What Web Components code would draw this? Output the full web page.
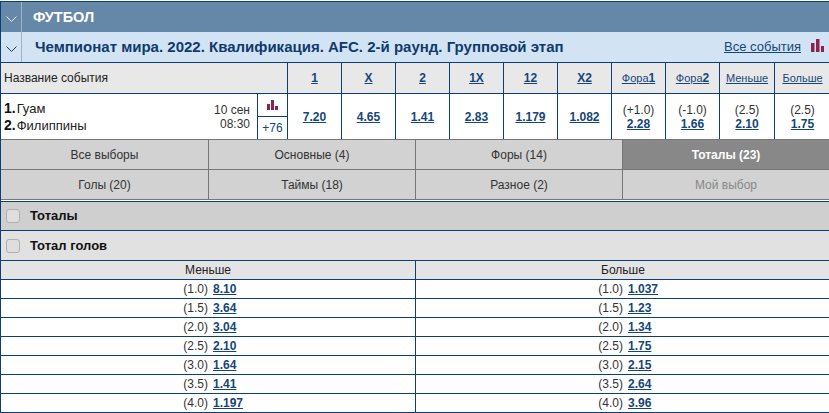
<!DOCTYPE html>
<html lang="ru">
<head>
<meta charset="utf-8">
<title>Футбол</title>
<style>
  html, body { margin: 0; background: #fff; }
  body { font: 12px "Liberation Sans", Arial, sans-serif; color: #222; }
  #page { width: 829px; box-sizing: border-box; margin-top: 1px; border-left: 1px solid #0b3f78; }
</style>
</head>
<body>
<div id="page">
  <sport-bar>ФУТБОЛ</sport-bar>
  <league-bar>Чемпионат мира. 2022. Квалификация. AFC. 2-й раунд. Групповой этап</league-bar>
  <event-table></event-table>
  <market-tabs></market-tabs>
  <group-head variant="dark" style="margin-top:1px;border-top:1px solid #0b3f78">Тоталы</group-head>
  <group-head>Тотал голов</group-head>
  <odds-grid></odds-grid>
</div>

<script>
const chevron = (color) => `<svg width="11" height="6" viewBox="0 0 11 6"><path d="M.5 .5 L5.5 5.5 L10.5 .5" fill="none" stroke="${color}" stroke-width="1"/></svg>`;

class SportBar extends HTMLElement {
  constructor() {
    super();
    this.attachShadow({ mode: "open" }).innerHTML = `
      <style>
        :host { display: flex; height: 30px; border-top: 1px solid #0b3f78; background: #6587a8; color: #fff; font: bold 14.5px "Liberation Sans", Arial, sans-serif; }
        .arrow { width: 20px; flex: none; display: flex; align-items: center; justify-content: center; border-right: 1px solid #9db2c8; padding-top: 3px; height: 27px; }
        .title { padding-left: 11px; line-height: 30px; }
      </style>
      <div class="arrow">${chevron("#e4ecf3")}</div>
      <div class="title"><slot></slot></div>`;
  }
}

class LeagueBar extends HTMLElement {
  constructor() {
    super();
    this.attachShadow({ mode: "open" }).innerHTML = `
      <style>
        :host { display: flex; height: 30px; border-bottom: 1px solid #0b3f78; background: #d2e4f3; font-family: "Liberation Sans", Arial, sans-serif; }
        .arrow { width: 20px; flex: none; display: flex; align-items: center; justify-content: center; border-right: 1px solid #9db2c8; padding-top: 4px; height: 26px; }
        .title { flex: 1; padding-left: 13px; line-height: 30px; font-weight: bold; font-size: 15px; color: #0f3a6e; }
        a { color: #154679; font-size: 13px; line-height: 30px; text-decoration: underline; }
        svg.chart { margin: 7px 5px 0 10px; }
      </style>
      <div class="arrow">${chevron("#26384d")}</div>
      <div class="title"><slot></slot></div>
      <a href="#">Все события</a>
      <svg class="chart" width="13" height="13" viewBox="0 0 13 13"><path fill="#8b2252" d="M0 4h3.5v9H0zM5 0h3.5v13H5zM10 7h3v6h-3z"/></svg>`;
  }
}

class EventTable extends HTMLElement {
  constructor() {
    super();
    const heads = ["1", "X", "2", "1X", "12", "X2"];
    const odds = ["7.20", "4.65", "1.41", "2.83", "1.179", "1.082"];
    const extra = [["Фора<b>1</b>", "(+1.0)", "2.28"], ["Фора<b>2</b>", "(-1.0)", "1.66"], ["Меньше", "(2.5)", "2.10"], ["Больше", "(2.5)", "1.75"]];
    this.attachShadow({ mode: "open" }).innerHTML = `
      <style>
        :host { display: grid; grid-template-columns: 287px repeat(6, 54px) 54px 54px 55px 54px; grid-template-rows: 31px 45px; font-family: "Liberation Sans", Arial, sans-serif; font-size: 12px; color: #222; border-bottom: 1px solid #777; }
        .h { background: #e8e8e8; border-bottom: 1px solid #0b3f78; display: flex; align-items: center; justify-content: center; box-sizing: border-box; }
        .h.name { justify-content: flex-start; padding-left: 3px; border-right: 1px solid #0b3f78; }
        .h.c, .c { border-right: 1px solid #0b3f78; box-sizing: border-box; }
        .c:last-child, .h.last { border-right: 0; padding-left: 1px; }
        .h a { color: #111; font-weight: bold; text-decoration: underline; }
        .h a.small { font-size: 11px; font-weight: normal; }
        .h a.small b { font-size: 12px; }
        .event { display: grid; grid-template-columns: 1fr auto 30px; border-right: 1px solid #0b3f78; }
        .teams { padding: 6px 0 0 3px; line-height: 17px; font-size: 13px; color: #222; }
        .teams b { font-size: 14px; color: #111; margin-right: 1px; line-height: 14px; }
        .date { padding: 9px 7px 0 0; line-height: 14px; text-align: right; color: #333; }
        .stat { border-left: 1px solid #0b3f78; display: grid; grid-template-rows: 22px 1fr; }
        .stat div { display: flex; align-items: center; justify-content: center; }
        .stat div + div { border-top: 1px solid #0b3f78; color: #154679; }
        .c { display: flex; flex-direction: column; align-items: center; justify-content: center; line-height: 14px; color: #333; }
        .c a { color: #154679; font-weight: bold; text-decoration: underline; }
      </style>
      <div class="h name">Название события</div>
      ${heads.map((t) => `<div class="h c"><a href="#">${t}</a></div>`).join("")}
      ${extra.map((e, i) => `<div class="h c ${i == 3 ? "last" : ""}"><a class="small" href="#">${e[0]}</a></div>`).join("")}
      <div class="event">
        <div class="teams"><b>1.</b>Гуам<br><b>2.</b>Филиппины</div>
        <div class="date">10 сен<br>08:30</div>
        <div class="stat">
          <div><svg width="11" height="10" viewBox="0 0 11 10"><path fill="#8b2252" d="M0 4h3v6H0zM4 0h3v10H4zM8 6h3v4H8z"/></svg></div>
          <div>+76</div>
        </div>
      </div>
      ${odds.map((o) => `<div class="c"><a href="#">${o}</a></div>`).join("")}
      ${extra.map((e) => `<div class="c"><span>${e[1]}</span><a href="#">${e[2]}</a></div>`).join("")}`;
  }
}

class MarketTabs extends HTMLElement {
  constructor() {
    super();
    const tabs = [
      ["Все выборы"], ["Основные (4)"], ["Форы (14)"], ["Тоталы (23)", "on"],
      ["Голы (20)"], ["Таймы (18)"], ["Разное (2)"], ["Мой выбор", "off"],
    ];
    this.attachShadow({ mode: "open" }).innerHTML = `
      <style>
        :host { display: grid; grid-template-columns: 208px 207px 207px 206px; grid-template-rows: 30px 30px; font-family: "Liberation Sans", Arial, sans-serif; font-size: 12px; }
        div { background: #d2d2d2; color: #333; display: flex; align-items: center; justify-content: center; box-sizing: border-box; border-bottom: 1px solid #777; border-right: 1px solid #777; }
        div:nth-of-type(4n) { border-right: 0; }
        .on { background: #888; color: #fff; font-weight: bold; }
        .off { color: #888; }
      </style>
      ${tabs.map(([t, cls]) => `<div class="${cls || ""}">${t}</div>`).join("")}`;
  }
}

class GroupHead extends HTMLElement {
  constructor() {
    super();
    this.attachShadow({ mode: "open" }).innerHTML = `
      <style>
        :host { display: flex; align-items: center; height: 29px; border-bottom: 1px solid #0b3f78; background: #e1e1e1; color: #111; font: bold 13px "Liberation Sans", Arial, sans-serif; }
        :host([variant="dark"]) { background: #cfcfcf; height: 27px; padding-bottom: 1px; }
        i { width: 12px; height: 12px; margin: 0 10px 0 5px; border: 1px solid #b0b0b0; border-radius: 3px; background: #dedede; }
      </style>
      <i></i><slot></slot>`;
  }
}

class OddsGrid extends HTMLElement {
  constructor() {
    super();
    const rows = [
      ["(1.0)", "8.10", "1.037"], ["(1.5)", "3.64", "1.23"], ["(2.0)", "3.04", "1.34"], ["(2.5)", "2.10", "1.75"],
      ["(3.0)", "1.64", "2.15"], ["(3.5)", "1.41", "2.64"], ["(4.0)", "1.197", "3.96"],
    ];
    const cell = (h, o) => `<div class="v"><span>${h}</span><a href="#">${o}</a></div>`;
    this.attachShadow({ mode: "open" }).innerHTML = `
      <style>
        :host { display: grid; grid-template-columns: 415px 413px; grid-auto-rows: 19px; font-family: "Liberation Sans", Arial, sans-serif; font-size: 12px; color: #333; }
        div { box-sizing: border-box; border-bottom: 1px solid #0b3f78; }
        div:nth-of-type(odd) { border-right: 1px solid #0b3f78; }
        .t { background: #e4e4e4; color: #222; display: flex; align-items: center; justify-content: center; }
        .t:nth-of-type(even) { padding-left: 1px; }
        .v { display: grid; grid-template-columns: 207px 1fr; align-items: center; }
        .v span { text-align: right; }
        a { color: #154679; font-weight: bold; text-decoration: underline; margin-left: 5px; justify-self: start; }
      </style>
      <div class="t">Меньше</div><div class="t">Больше</div>
      ${rows.map((r) => cell(r[0], r[1]) + cell(r[0], r[2])).join("")}`;
  }
}

customElements.define("sport-bar", SportBar);
customElements.define("league-bar", LeagueBar);
customElements.define("event-table", EventTable);
customElements.define("market-tabs", MarketTabs);
customElements.define("group-head", GroupHead);
customElements.define("odds-grid", OddsGrid);
</script>
</body>
</html>
